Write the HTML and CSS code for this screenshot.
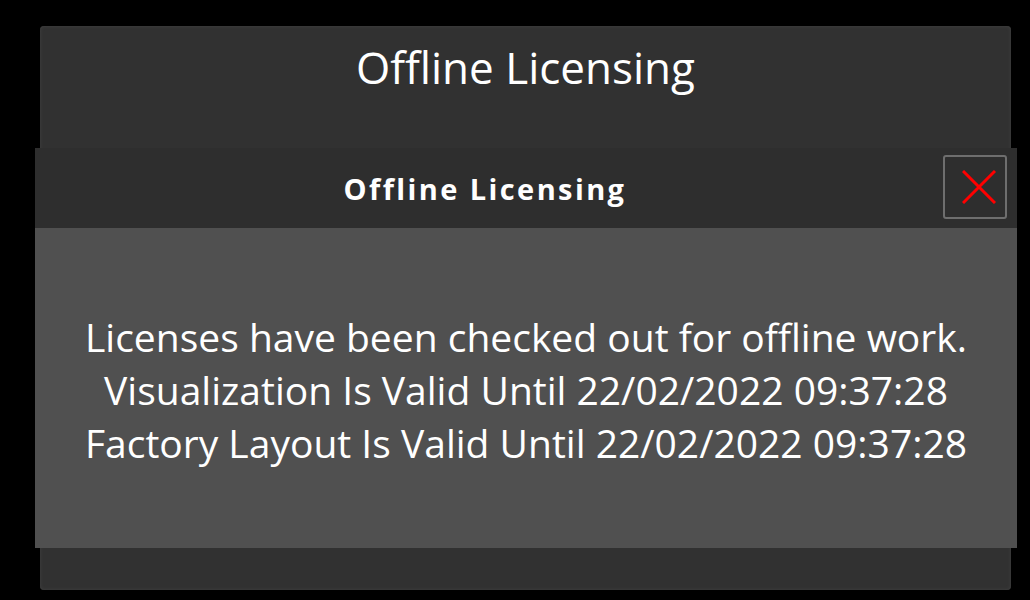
FILE: index.html
```html
<!DOCTYPE html>
<html>
<head>
<meta charset="utf-8">
<link rel="stylesheet" href="styles.css">
</head>
<body>
<div class="window">
  <div class="window-title">Offline Licensing</div>
  <div class="dialog">
    <div class="dialog-header">
      <div class="dialog-title">Offline Licensing</div>
      <button class="close-btn" aria-label="Close">
        <svg width="34" height="34" viewBox="0 0 34 34"><path d="M1 1 L33 33 M33 1 L1 33" stroke="#ff0000" stroke-width="3" fill="none"/></svg>
      </button>
    </div>
    <div class="dialog-body">
      <p>Licenses have been checked out for offline work.</p>
      <p>Visualization Is Valid Until 22/02/2022 09:37:28</p>
      <p>Factory Layout Is Valid Until 22/02/2022 09:37:28</p>
    </div>
  </div>
</div>
</body>
</html>
```
FILE: styles.css
```css
html, body {
  margin: 0;
  padding: 0;
  background: #000;
  width: 1030px;
  height: 600px;
  overflow: hidden;
}
body {
  padding: 26px 0 0 40px;
  box-sizing: border-box;
  font-family: "Open Sans", "Noto Sans", sans-serif;
  color: #fff;
}
.window {
  width: 971px;
  height: 564px;
  box-sizing: border-box;
  background: #313131;
  border-radius: 4px;
  box-shadow: inset 0 0 3px 1px #3c3c3c;
  display: flex;
  flex-direction: column;
}
.window-title {
  height: 122px;
  text-align: center;
  font-size: 44px;
  line-height: 82px;
  font-weight: 400;
}
.dialog {
  margin: 0 -6px 0 -5px;
  height: 400px;
  display: flex;
  flex-direction: column;
}
.dialog-header {
  height: 80px;
  background: #2e2e2e;
  display: flex;
  align-items: center;
  padding: 0 10px 0 0;
}
.dialog-title {
  flex: 1;
  text-align: center;
  font-size: 29px;
  font-weight: 700;
  letter-spacing: 2.4px;
  padding-right: 8px;
}
.close-btn {
  width: 64px;
  height: 64px;
  margin-top: -2px;
  border: 2px solid #6e6e6e;
  border-radius: 3px;
  background: #2e2e2e;
  display: flex;
  align-items: center;
  justify-content: center;
  padding: 0 0 0 7px;
}
.dialog-body {
  flex: 1;
  background: #505050;
  display: flex;
  flex-direction: column;
  justify-content: center;
  align-items: center;
  font-size: 39px;
  font-weight: 500;
  line-height: 53px;
  padding-top: 2px;
  box-sizing: border-box;
}
.dialog-body p {
  margin: 0;
  text-align: center;
}
```
